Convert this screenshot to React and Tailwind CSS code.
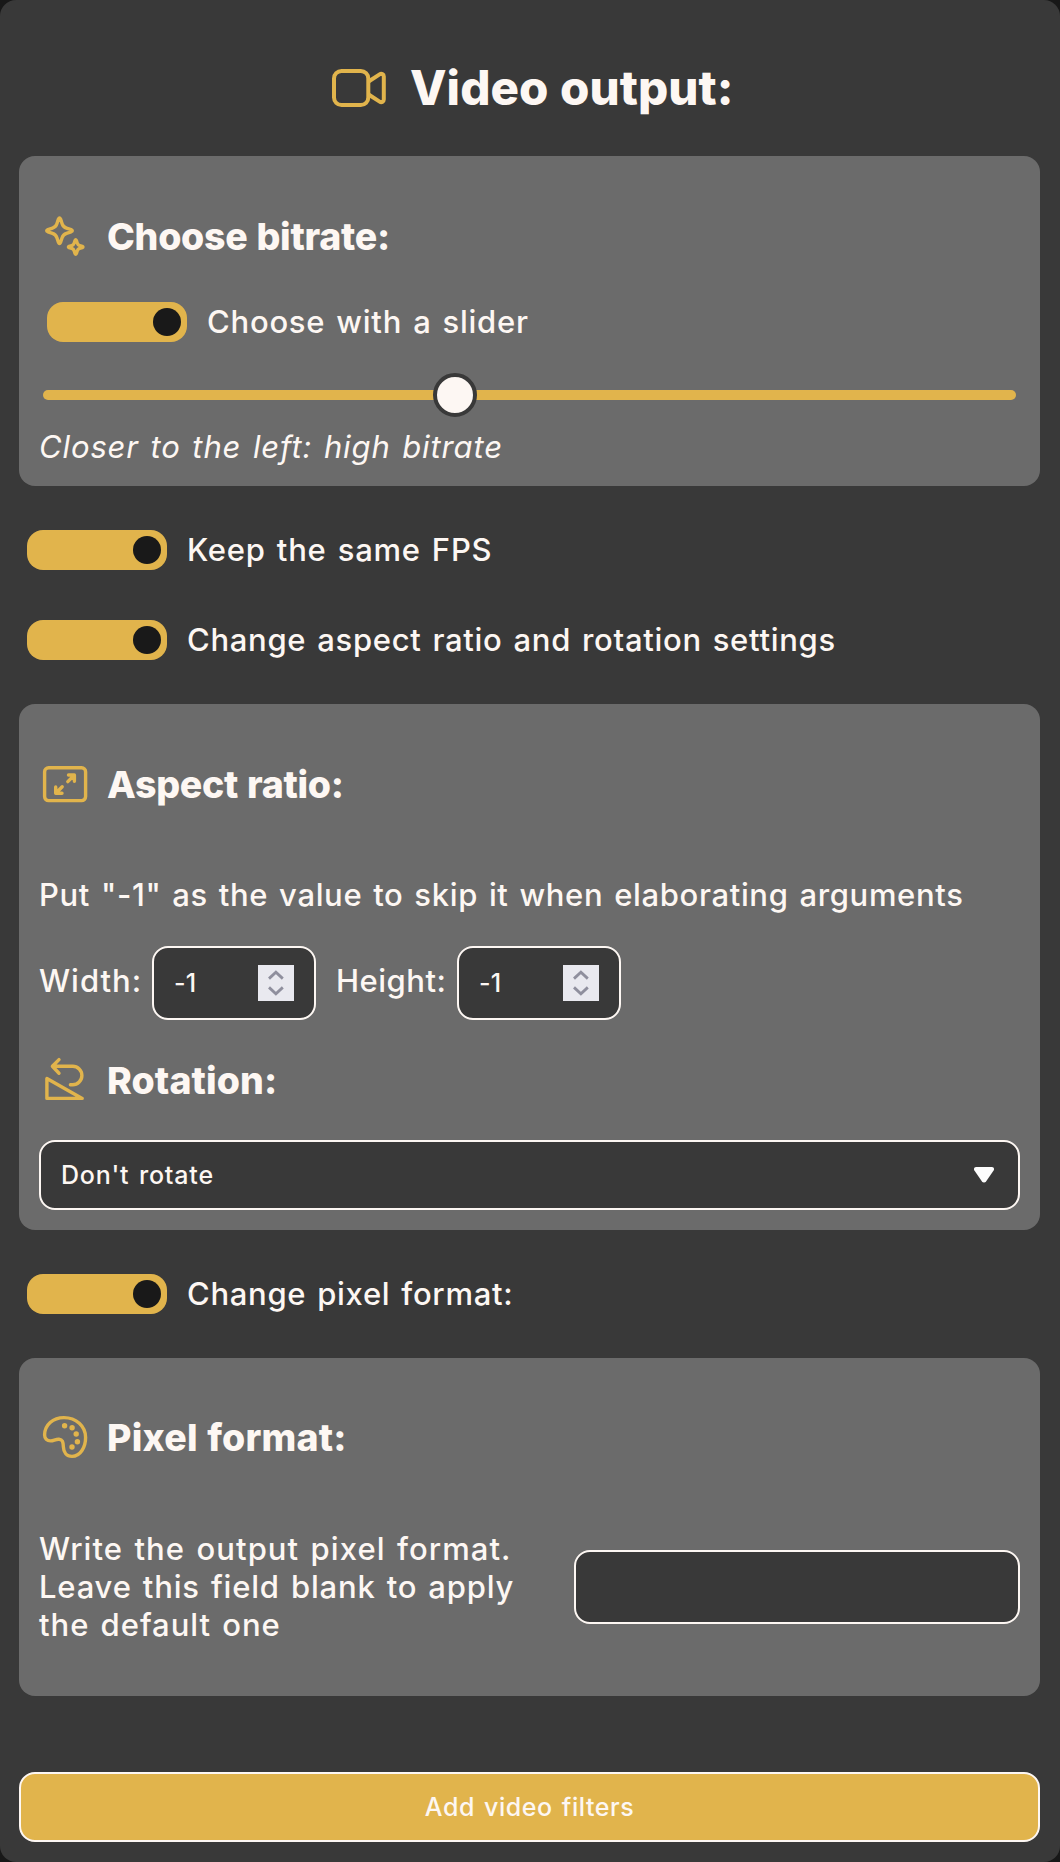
import React from "react";

function Stroke({ children, className = "h-[46px] w-[46px]", viewBox = "0 0 46 46", width = 3.4 }) {
  return (
    <svg
      className={`shrink-0 text-[#e1b44c] ${className}`}
      viewBox={viewBox}
      fill="none"
      stroke="currentColor"
      strokeWidth={width}
      strokeLinecap="round"
      strokeLinejoin="round"
    >
      {children}
    </svg>
  );
}

const VideoIcon = () => (
  <Stroke className="h-14 w-[58px]" viewBox="0 0 58 56" width={4}>
    <rect x="4" y="11" width="34.3" height="34" rx="7.5" />
    <path d="M39 21.3 49.6 14.4C51.5 13.2 53.8 14.2 53.8 16.4V39.6C53.8 41.8 51.5 42.8 49.6 41.6L39 34.7" />
  </Stroke>
);

const star =
  "M-1.1-11.6Q0-14 1.1-11.6L2.6-7C3.4-4.6 4.6-3.4 7-2.6L11.6-1.1Q14 0 11.6 1.1L7 2.6C4.6 3.4 3.4 4.6 2.6 7L1.1 11.6Q0 14-1.1 11.6L-2.6 7C-3.4 4.6-4.6 3.4-7 2.6L-11.6 1.1Q-14 0-11.6-1.1L-7-2.6C-4.6-3.4-3.4-4.6-2.6-7Z";

const SparkleIcon = () => (
  <Stroke>
    <path d={star} transform="translate(17.5 17.7)" />
    <path d={star} transform="translate(33.7 34) scale(.57)" vectorEffect="non-scaling-stroke" />
  </Stroke>
);

const AspectIcon = () => (
  <Stroke>
    <rect x="2.6" y="6.8" width="41" height="32.8" rx="4" />
    <path d="M26.5 14H32.4V20.2M32.2 14.2 25.8 20.6M13.7 26V32.3H20M14 32 20.2 25.8" />
  </Stroke>
);

const RotateIcon = () => (
  <Stroke>
    <path d="M17 2.6 10.4 9.3 17 16.2M10.8 9.3H30.7A9.2 9.2 0 0 1 30.7 27.7H28.4" />
    <path d="M4.9 21.5V41.4H40.2Z" />
  </Stroke>
);

const PaletteIcon = () => (
  <Stroke>
    <path d="M2.6 21C2.6 11 11 3.6 22 3.6 34 3.6 43.6 12 43.6 23.5 43.6 33 38.5 42.4 30 42.4 24.5 42.4 21.6 38.5 21.4 33 21.2 28 20.5 25.5 17 25.2 13.5 25 11.5 27 8.5 26.9 5 26.8 2.6 24.5 2.6 21Z" />
    <g fill="currentColor" stroke="none">
      <circle cx="22.6" cy="11.7" r="2.7" />
      <circle cx="30.1" cy="13.8" r="2.7" />
      <circle cx="34.2" cy="20" r="2.7" />
      <circle cx="35.4" cy="27.8" r="2.7" />
      <circle cx="30" cy="33" r="2.7" />
    </g>
  </Stroke>
);

function Heading({ icon, tracking, children }) {
  return (
    <div className="ml-[3px] flex h-[46px] items-center gap-[19px]">
      {icon}
      <h2 className={`pt-0.5 text-[37.5px] leading-[44px] font-extrabold whitespace-nowrap [word-spacing:1px] ${tracking}`}>
        {children}
      </h2>
    </div>
  );
}

function Toggle({ tracking, children }) {
  return (
    <div className="ml-2 flex h-10 items-center gap-5">
      <span className="flex h-10 w-[140px] shrink-0 items-center justify-end rounded-2xl bg-[#e1b44c] pr-1.5">
        <span className="h-7 w-7 rounded-full bg-[#191919]" />
      </span>
      <span className={`text-[31px] leading-10 whitespace-nowrap [word-spacing:2px] ${tracking}`}>{children}</span>
    </div>
  );
}

function NumberField() {
  return (
    <div className="flex h-[74px] w-[164px] items-center justify-between rounded-2xl border-2 border-[#fdf7f3] bg-[#393939] pr-5 pl-5">
      <span className="text-[25px] leading-none tracking-[0.3px]">-1</span>
      <span className="flex h-9 w-9 items-center justify-center bg-[#e9e9ef]">
        <svg className="h-9 w-9" viewBox="0 0 36 36" fill="none" stroke="#8f8f9d" strokeWidth="2.8">
          <path d="M11 13.6 17.9 7.2 24.8 13.6M11 22.4 17.9 28.8 24.8 22.4" />
        </svg>
      </span>
    </div>
  );
}

export default function App() {
  return (
    <div className="min-h-[1862px] bg-[#181818] [font-family:Inter,'Liberation_Sans',sans-serif] font-[450] text-[#fdf7f3]">
      <main className="flex h-[1862px] w-[1060px] flex-col rounded-2xl bg-[#393939] pr-5 pl-[19px]">
        <header className="mt-[60px] ml-[311px] flex h-14 items-center gap-[22px]">
          <VideoIcon />
          <h1 className="text-[47.5px] leading-[56px] font-extrabold tracking-[0.07px] whitespace-nowrap [word-spacing:1px]">
            Video output:
          </h1>
        </header>

        <section className="mt-10 h-[330px] rounded-2xl bg-[#6b6b6b] px-5 pt-[57px]">
          <Heading icon={<SparkleIcon />} tracking="tracking-[-0.27px]">Choose bitrate:</Heading>
          <div className="mt-[43px]">
            <Toggle tracking="tracking-[0.76px]">Choose with a slider</Toggle>
          </div>
          <div className="relative mr-1 ml-1 mt-[31px] flex h-11 items-center">
            <div className="h-2.5 w-full rounded-full bg-[#e1b44c]" />
            <div className="absolute left-[390px] h-11 w-11 rounded-full border-4 border-[#393939] bg-[#fdf7f3]" />
          </div>
          <p className="mt-[11px] text-[31px] leading-[38px] tracking-[0.88px] italic [word-spacing:2px]">
            Closer to the left: high bitrate
          </p>
        </section>

        <div className="mt-11 flex flex-col gap-[50px]">
          <Toggle tracking="tracking-[0.78px]">Keep the same FPS</Toggle>
          <Toggle tracking="tracking-[0.7px]">Change aspect ratio and rotation settings</Toggle>
        </div>

        <section className="mt-11 h-[526px] rounded-2xl bg-[#6b6b6b] px-5 pt-[57px]">
          <Heading icon={<AspectIcon />} tracking="tracking-[-0.3px]">Aspect ratio:</Heading>
          <p className="mt-[69px] text-[31px] leading-[38px] tracking-[0.65px] whitespace-nowrap [word-spacing:2px]">
            Put "-1" as the value to skip it when elaborating arguments
          </p>
          <div className="mt-8 flex h-[74px] items-center">
            <span className="w-[113px] pb-1 text-[31px] leading-[38px] tracking-[1px]">Width:</span>
            <NumberField />
            <span className="ml-[20px] w-[121px] pb-1 text-[31px] leading-[38px] tracking-[0.5px]">Height:</span>
            <NumberField />
          </div>
          <div className="mt-[37px]">
            <Heading icon={<RotateIcon />} tracking="tracking-[0.1px]">Rotation:</Heading>
          </div>
          <button className="mt-[37px] flex h-[70px] w-full items-center justify-between rounded-2xl border-2 border-[#fdf7f3] bg-[#393939] pr-6 pl-5 text-left">
            <span className="pt-0.5 text-[25px] tracking-[0.82px] [word-spacing:2px]">Don't rotate</span>
            <svg className="h-4 w-5" viewBox="0 0 20 16" fill="#fdfdfd">
              <path d="M2 0H18C19.8 0 20.6 2 19.6 3.5L12.2 14.2C11 15.9 9 15.9 7.8 14.2L.4 3.5C-.6 2 .2 0 2 0Z" />
            </svg>
          </button>
        </section>

        <div className="mt-11">
          <Toggle tracking="tracking-[0.7px]">Change pixel format:</Toggle>
        </div>

        <section className="mt-11 h-[338px] rounded-2xl bg-[#6b6b6b] px-5 pt-14">
          <Heading icon={<PaletteIcon />} tracking="tracking-[0.2px]">Pixel format:</Heading>
          <div className="mt-[70px] flex h-[114px] items-center justify-between">
            <p className="flex flex-col text-[31px] leading-[38px] whitespace-nowrap [word-spacing:2px]">
              <span className="tracking-[1.08px]">Write the output pixel format.</span>
              <span className="tracking-[0.82px]">Leave this field blank to apply</span>
              <span className="tracking-[0.97px]">the default one</span>
            </p>
            <input
              type="text"
              className="h-[74px] w-[446px] rounded-2xl border-2 border-[#fdf7f3] bg-[#393939] px-5 text-2xl outline-none"
            />
          </div>
        </section>

        <button className="mt-[76px] h-[70px] w-full shrink-0 rounded-2xl border-2 border-[#fdf7f3] bg-[#e1b44c] pt-0.5 text-[25px] tracking-[0.53px] [word-spacing:2px]">
          Add video filters
        </button>
      </main>
    </div>
  );
}
